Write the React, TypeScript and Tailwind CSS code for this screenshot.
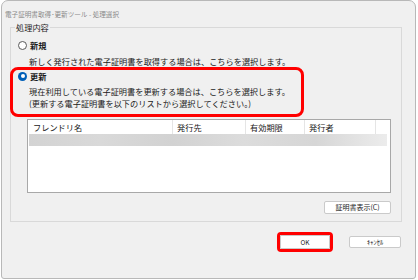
import React from 'react';

const font = { fontFamily: '"Noto Sans CJK JP", "Noto Sans", sans-serif' };

function Radio({ checked }: { checked?: boolean }) {
  if (checked) {
    return (
      <span className="flex h-[9px] w-[9px] shrink-0 items-center justify-center rounded-full bg-[#005fb8]">
        <span className="h-[4px] w-[4px] rounded-full bg-white" />
      </span>
    );
  }
  return <span className="h-[9px] w-[9px] shrink-0 rounded-full border border-[#5a5a5a] bg-white" />;
}

const columns = [
  { label: 'フレンドリ名', w: 'w-[144px]' },
  { label: '発行先', w: 'w-[73px]' },
  { label: '有効期限', w: 'w-[59px]' },
  { label: '発行者', w: 'w-[71px]' },
];

export default function App() {
  return (
    <div className="h-[280px] w-[418px] bg-white text-[8.2px] leading-[12px] text-[#1a1a1a]" style={font}>
      <div className="ml-[1px] flex h-[279px] w-[415px] flex-col rounded-t-[7px] rounded-b-[3px] border border-[#b8b8b8] bg-[#f0f0f0]">
        <div className="flex h-[25px] items-center pl-[3px] text-[6.6px] text-[#8a8a8a] whitespace-nowrap">
          電子証明書取得･更新ツール - 処理選択
        </div>

        <div className="ml-[8px] mt-[1px] flex h-[195px] w-[392px] flex-col border border-[#d9d9d9]">
          <div className="-mt-[7px] ml-[4px] w-fit bg-[#f0f0f0] px-[1px]">処理内容</div>

          <div className="mt-[6px] flex h-[12px] items-center gap-[3px] pl-[7px]">
            <Radio />
            <span className="font-bold">新規</span>
          </div>
          <div className="mt-[4px] pl-[18px] whitespace-nowrap">
            新しく発行された電子証明書を取得する場合は、こちらを選択します。
          </div>

          <div className="-ml-[1px] flex w-[294px] flex-col rounded-[8px] border-[3px] border-[#ff0000] pb-[5px]">
            <div className="flex h-[12px] items-center gap-[3px] pl-[5px]">
              <Radio checked />
              <span className="font-bold">更新</span>
            </div>
            <div className="mt-[3px] pl-[16px] whitespace-nowrap">
              現在利用している電子証明書を更新する場合は、こちらを選択します。
            </div>
            <div className="pl-[16px] whitespace-nowrap">
              (更新する電子証明書を以下のリストから選択してください。)
            </div>
          </div>

          <div className="ml-[16px] mt-[2px] flex h-[74px] w-[364px] flex-col border border-[#a8a8a8] bg-white px-[1px]">
            <div className="flex h-[14px]">
              {columns.map((c) => (
                <div key={c.label} className={`${c.w} flex items-center border-r border-[#e5e5e5] pl-[4px] whitespace-nowrap`}>
                  {c.label}
                </div>
              ))}
            </div>
            <div className="h-[12px] w-[358px] bg-[linear-gradient(90deg,#d3d3d3_0%,#d9d9d9_20%,#d2d2d2_40%,#dcdcdc_60%,#d6d6d6_80%,#ececec_100%)]" />
          </div>

          <div className="mt-[8px] flex justify-end pr-[10px]">
            <button className="flex h-[13px] w-[67px] items-center justify-center rounded-[2px] border border-[#cacaca] bg-white text-[7px] leading-none">
              証明書表示(C)
            </button>
          </div>
        </div>

        <div className="mt-[10px] flex items-center justify-end gap-[16px] pr-[14px]">
          <div className="rounded-[4px] border-[3px] border-[#ff0000]">
            <button className="flex h-[14px] w-[50px] items-center justify-center rounded-[1px] border border-[#cacaca] bg-white text-[6.5px] leading-none">
              OK
            </button>
          </div>
          <button className="flex h-[12px] w-[52px] items-center justify-center rounded-[2px] border border-[#cacaca] bg-white text-[6.5px] leading-none">
            ｷｬﾝｾﾙ
          </button>
        </div>
      </div>
    </div>
  );
}
